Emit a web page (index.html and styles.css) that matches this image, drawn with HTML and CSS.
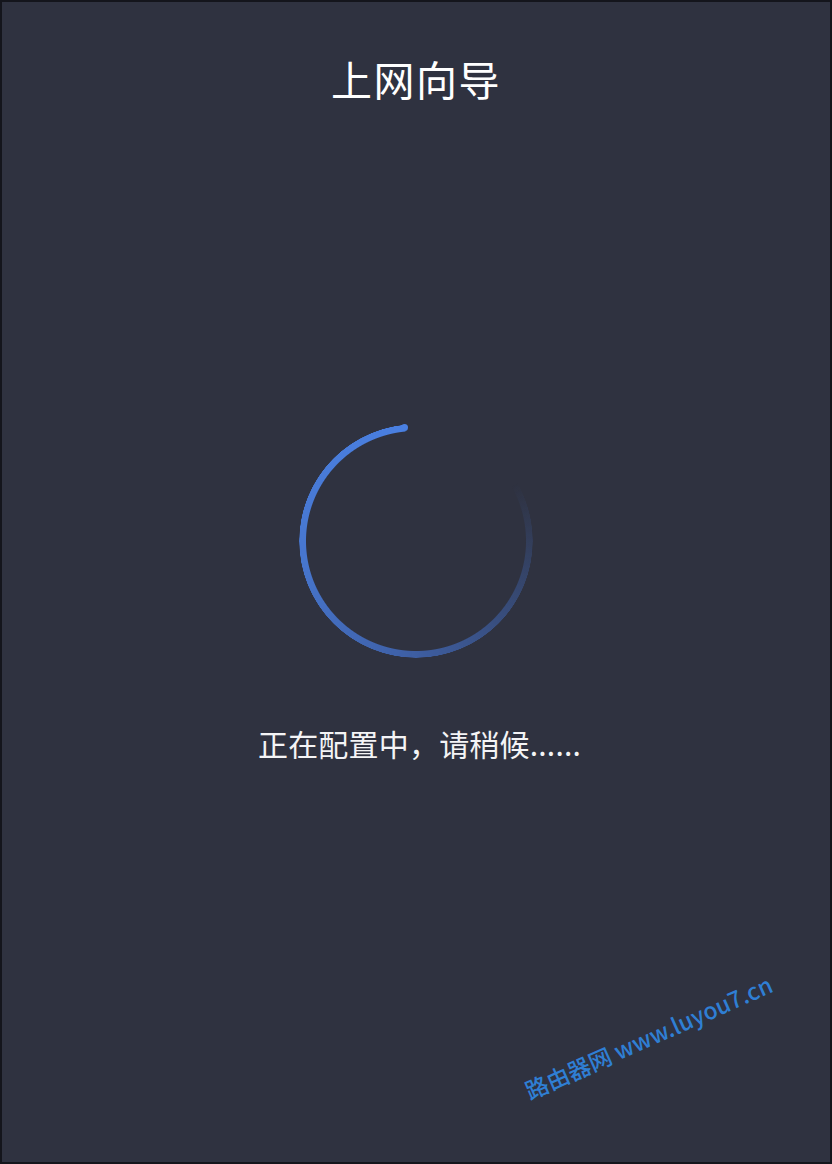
FILE: index.html
```html
<!DOCTYPE html>
<html lang="zh-CN">
<head>
<meta charset="utf-8">
<title>上网向导</title>
<link rel="stylesheet" href="styles.css">
</head>
<body>
<div class="screen">
  <h1 class="title">上网向导</h1>
  <div class="spinner">
    <div class="ring"></div>
    <div class="cap"></div>
  </div>
  <p class="status">正在配置中，请稍候......</p>
  <div class="watermark">路由器网 www.luyou7.cn</div>
</div>
</body>
</html>
```

FILE: styles.css
```css
html, body {
  margin: 0;
  padding: 0;
  background: #2f3240;
}
.screen {
  position: relative;
  box-sizing: border-box;
  width: 832px;
  height: 1164px;
  border: 2px solid #14151c;
  background: #2f3240;
  display: flex;
  flex-direction: column;
  align-items: center;
  font-family: "Noto Sans CJK SC", "Noto Sans", sans-serif;
  color: #ffffff;
  overflow: hidden;
}
.title {
  margin: 46px 0 0;
  font-size: 41px;
  font-weight: 400;
  line-height: 60px;
  letter-spacing: 1.5px;
}
.spinner {
  position: relative;
  margin-top: 316px;
  width: 234px;
  height: 234px;
}
.ring {
  width: 100%;
  height: 100%;
  border-radius: 50%;
  background: conic-gradient(from 60deg,
    rgba(74, 128, 224, 0) 0deg,
    rgba(70, 118, 214, 0.35) 60deg,
    rgba(70, 118, 214, 0.7) 130deg,
    rgba(74, 126, 222, 0.9) 200deg,
    #4a80e2 294deg,
    rgba(74, 128, 224, 0) 295deg);
  -webkit-mask: radial-gradient(circle closest-side, transparent 109.5px, #000 110.5px, #000 116.5px, transparent 117px);
  mask: radial-gradient(circle closest-side, transparent 109.5px, #000 110.5px, #000 116.5px, transparent 117px);
}
.cap {
  position: absolute;
  left: 102px;
  top: 0;
  width: 7px;
  height: 7px;
  border-radius: 50%;
  background: #4a80e2;
}
.status {
  margin: 65px 0 0;
  padding-left: 7px;
  font-size: 30px;
  line-height: 40px;
  font-weight: 400;
  letter-spacing: 0.2px;
  color: #f4f4f6;
}
.watermark {
  position: absolute;
  left: 524px;
  top: 1072px;
  font-family: "Noto Sans CJK SC", "Noto Sans", sans-serif;
  font-size: 23px;
  font-weight: 500;
  color: #2f7fd4;
  white-space: nowrap;
  transform: rotate(-24deg);
  transform-origin: left center;
}
```
